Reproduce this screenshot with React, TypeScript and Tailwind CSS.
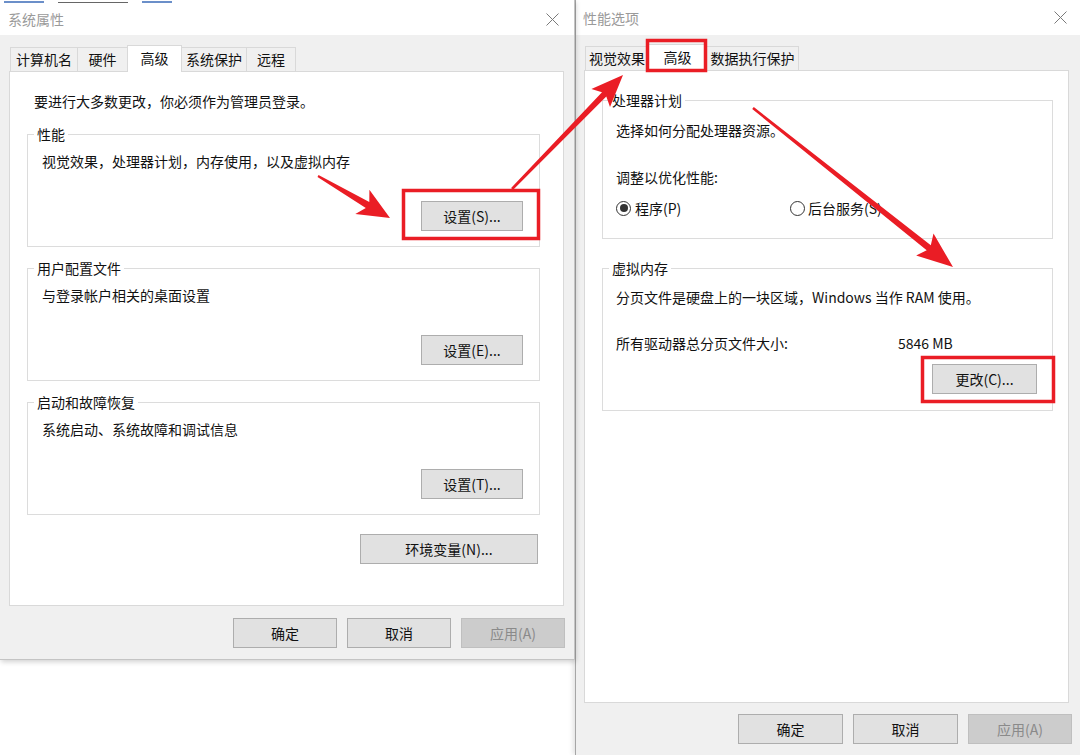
import React from "react";

function XIcon() {
  return (
    <svg width="13" height="13" viewBox="0 0 13 13">
      <path d="M0.5 0.5 L12.5 12.5 M12.5 0.5 L0.5 12.5" stroke="#7a7a7a" strokeWidth="1" fill="none" />
    </svg>
  );
}

function Btn({ children, cls }: { children: React.ReactNode; cls: string }) {
  return (
    <div className={"flex items-center justify-center h-[30px] border border-[#adadad] bg-[#e1e1e1] text-[14px] leading-[20px] text-[#111] " + cls}>
      {children}
    </div>
  );
}

function DisabledBtn({ children }: { children: React.ReactNode }) {
  return (
    <div className="flex items-center justify-center h-[30px] w-[104px] border border-[#bfbfbf] bg-[#cccccc] text-[14px] leading-[20px] text-[#8a8a8a]">
      {children}
    </div>
  );
}

function Tab({ label, cls, selected }: { label: string; cls: string; selected?: boolean }) {
  if (selected) {
    return (
      <div className={"relative z-10 -mb-px h-[27px] bg-white border border-b-0 border-[#d9d9d9] flex items-start justify-center pt-[2px] text-[14px] leading-[20px] text-[#111] " + cls}>
        {label}
      </div>
    );
  }
  return (
    <div className={"h-[24px] bg-[#f0f0f0] border border-b-0 border-[#d9d9d9] flex items-start justify-center pt-[1px] text-[14px] leading-[20px] text-[#111] " + cls}>
      {label}
    </div>
  );
}

function arrowPoints(tx: number, ty: number, px: number, py: number, w0: number, w1: number, L: number, H: number, notch: number) {
  const dx = px - tx;
  const dy = py - ty;
  const len = Math.hypot(dx, dy);
  const ux = dx / len;
  const uy = dy / len;
  const nx = -uy;
  const ny = ux;
  const bx = px - ux * L;
  const by = py - uy * L;
  const sx = bx + ux * notch;
  const sy = by + uy * notch;
  const pts: [number, number][] = [
    [tx + nx * w0 / 2, ty + ny * w0 / 2],
    [sx + nx * w1 / 2, sy + ny * w1 / 2],
    [bx + nx * H, by + ny * H],
    [px, py],
    [bx - nx * H, by - ny * H],
    [sx - nx * w1 / 2, sy - ny * w1 / 2],
    [tx - nx * w0 / 2, ty - ny * w0 / 2],
  ];
  return pts.map((p) => p[0].toFixed(1) + "," + p[1].toFixed(1)).join(" ");
}

function Overlay() {
  const red = "#ea1d25";
  return (
    <svg className="absolute left-0 top-0 pointer-events-none z-30" width="1080" height="755" viewBox="0 0 1080 755">
      <rect x="403.5" y="190.5" width="135" height="48" fill="none" stroke={red} strokeWidth="3.5" />
      <rect x="647.5" y="40.5" width="58" height="30" fill="none" stroke={red} strokeWidth="3.5" />
      <rect x="922.5" y="357.5" width="131" height="44" fill="none" stroke={red} strokeWidth="3.5" />
      <polygon points={arrowPoints(318, 176, 390, 218, 2, 7, 32, 14, 6)} fill={red} />
      <polygon points={arrowPoints(512, 189, 623, 75, 2.5, 6, 32, 13, 5)} fill={red} />
      <polygon points={arrowPoints(753, 108, 953, 267, 2.5, 6.5, 36, 14, 5)} fill={red} />
    </svg>
  );
}

function Group({ title, children, cls }: { title: string; children: React.ReactNode; cls: string }) {
  return (
    <fieldset className={"border border-[#dcdcdc] " + cls}>
      <legend className="ml-[6px] px-[3px] text-[14px] leading-[20px] text-[#111]">{title}</legend>
      {children}
    </fieldset>
  );
}

function LeftGroup({ title, text, btn, cls }: { title: string; text: string; btn: string; cls: string }) {
  return (
    <Group title={title} cls={"w-[513px] " + cls}>
      <div className="pl-[14px] pr-[16px] pt-[7px] pb-[15px]">
        <div className="text-[14px] leading-[20px] text-[#111]">{text}</div>
        <div className="flex justify-end mt-[30px]">
          <Btn cls="w-[102px]">{btn}</Btn>
        </div>
      </div>
    </Group>
  );
}

function LeftDialog() {
  return (
    <div className="w-[575px] h-[660px] flex flex-col border-r border-b border-[#c4c4c4] shadow-[1px_2px_5px_rgba(0,0,0,0.18)] relative z-10">
      <div className="h-[3px] bg-white overflow-hidden flex gap-[14px] pl-[4px] items-end">
        <div className="w-[40px] h-[2px] bg-[#6b8fc9]" />
        <div className="w-[70px] h-[1px] bg-[#666]" />
        <div className="w-[30px] h-[2px] bg-[#6b8fc9]" />
      </div>
      <div className="h-[32px] bg-white flex items-center justify-between pl-[8px] pr-[15px]">
        <span className="text-[14px] leading-[20px] text-[#9a9a9a]">系统属性</span>
        <XIcon />
      </div>
      <div className="flex-1 bg-[#f0f0f0] pt-[10px] flex flex-col">
        <div className="flex items-end h-[26px] ml-[10px]">
          <Tab label="计算机名" cls="w-[68px]" />
          <Tab label="硬件" cls="w-[51px] -ml-px" />
          <Tab label="高级" cls="w-[55px] -ml-px" selected />
          <Tab label="系统保护" cls="w-[66px] -ml-px" />
          <Tab label="远程" cls="w-[50px] -ml-px" />
        </div>
        <div className="ml-[9px] w-[555px] h-[535px] border border-[#d9d9d9] bg-white pt-[19px] pl-[17px]">
          <div className="ml-[7px] text-[14px] leading-[20px] text-[#111]">要进行大多数更改，你必须作为管理员登录。</div>
          <LeftGroup cls="mt-[13px]" title="性能" text="视觉效果，处理器计划，内存使用，以及虚拟内存" btn="设置(S)..." />
          <LeftGroup cls="mt-[11px]" title="用户配置文件" text="与登录帐户相关的桌面设置" btn="设置(E)..." />
          <LeftGroup cls="mt-[11px]" title="启动和故障恢复" text="系统启动、系统故障和调试信息" btn="设置(T)..." />
          <div className="w-[513px] flex justify-end pr-[2px] mt-[19px]">
            <Btn cls="w-[178px]">环境变量(N)...</Btn>
          </div>
        </div>
        <div className="flex justify-end gap-[10px] pr-[9px] mt-[12px]">
          <Btn cls="w-[104px]">确定</Btn>
          <Btn cls="w-[104px]">取消</Btn>
          <DisabledBtn>应用(A)</DisabledBtn>
        </div>
      </div>
    </div>
  );
}

function Radio({ checked }: { checked?: boolean }) {
  return (
    <div className="w-[15px] h-[15px] rounded-full border border-[#333] bg-white flex items-center justify-center">
      {checked ? <div className="w-[8px] h-[8px] rounded-full bg-[#333]" /> : null}
    </div>
  );
}

function RightDialog() {
  return (
    <div className="w-[505px] h-[755px] flex flex-col border-l border-[#a6a6a6] shadow-[-2px_0_5px_rgba(0,0,0,0.12)]">
      <div className="h-[35px] bg-white flex items-center justify-between pl-[7px] pr-[13px]">
        <span className="text-[14px] leading-[20px] text-[#9a9a9a]">性能选项</span>
        <XIcon />
      </div>
      <div className="flex-1 bg-[#f0f0f0] pt-[9px] flex flex-col">
        <div className="flex items-end h-[26px] ml-[9px]">
          <Tab label="视觉效果" cls="w-[64px]" />
          <Tab label="高级" cls="w-[59px] -ml-px" selected />
          <Tab label="数据执行保护" cls="w-[93px] -ml-px" />
        </div>
        <div className="ml-[8px] w-[485px] h-[633px] border border-[#d9d9d9] bg-white pt-[19px] pl-[17px]">
          <Group title="处理器计划" cls="w-[451px]">
            <div className="pl-[13px] pt-[10px] pb-[20px] text-[14px] leading-[20px] text-[#111]">
              <div>选择如何分配处理器资源。</div>
              <div className="mt-[27px]">调整以优化性能:</div>
              <div className="flex mt-[11px]">
                <div className="w-[174px] flex items-center gap-[4px]">
                  <Radio checked />
                  <span>程序(P)</span>
                </div>
                <div className="flex items-center gap-[3px]">
                  <Radio />
                  <span>后台服务(S)</span>
                </div>
              </div>
            </div>
          </Group>
          <Group title="虚拟内存" cls="w-[451px] mt-[19px]">
            <div className="pl-[13px] pr-[15px] pt-[9px] pb-[16px] text-[14px] leading-[20px] text-[#111]">
              <div>分页文件是硬盘上的一块区域，Windows 当作 RAM 使用。</div>
              <div className="flex mt-[26px]">
                <span className="w-[282px]">所有驱动器总分页文件大小:</span>
                <span>5846 MB</span>
              </div>
              <div className="flex justify-end mt-[11px]">
                <Btn cls="w-[105px]">更改(C)...</Btn>
              </div>
            </div>
          </Group>
        </div>
        <div className="flex justify-end gap-[10px] pr-[8px] mt-[11px]">
          <Btn cls="w-[105px]">确定</Btn>
          <Btn cls="w-[105px]">取消</Btn>
          <DisabledBtn>应用(A)</DisabledBtn>
        </div>
      </div>
    </div>
  );
}

export default function App() {
  return (
    <div className="relative w-[1080px] h-[755px] bg-white overflow-hidden font-['Noto_Sans_CJK_SC','Microsoft_YaHei',sans-serif]">
      <div className="flex">
        <div className="w-[575px] h-[755px] bg-white">
          <LeftDialog />
        </div>
        <RightDialog />
      </div>
      <Overlay />
    </div>
  );
}
